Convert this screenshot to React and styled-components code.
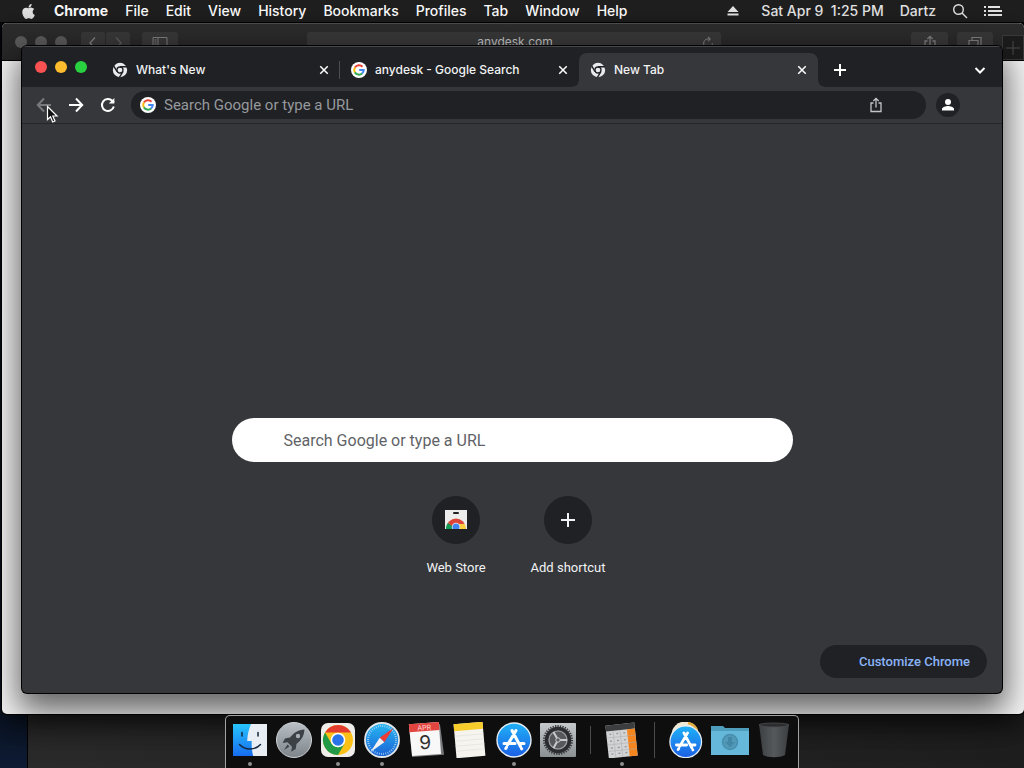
import React from "react";
import styled, { createGlobalStyle, css } from "styled-components";
import { FaApple } from "react-icons/fa";

const GlobalStyle = createGlobalStyle`
  * { box-sizing: border-box; }
  body { margin: 0; background: #0a1020; }
  button, input { font: inherit; color: inherit; border: 0; background: none; padding: 0; margin: 0; }
  svg { display: block; flex: none; }
`;

const uiFont = `Inter, "Open Sans", sans-serif`;
const webFont = `Roboto, "Liberation Sans", sans-serif`;

/* ---------- Desktop ---------- */
const Desktop = styled.div`
  position: relative;
  height: 100vh;
  overflow: hidden;
  background: linear-gradient(#05070c, #0b1526 92%, #0e1b33);
  font-family: ${uiFont};
  color: #fff;
`;

const MenuBar = styled.header`
  position: relative;
  display: flex;
  align-items: center;
  justify-content: space-between;
  height: 23px;
  padding: 0 22px 0 20px;
  background: #1f1f20;
  border-bottom: 1px solid #000;
  font-size: 14px;
  font-weight: 500;
  line-height: 22px;
`;

const MenuGroup = styled.nav`
  display: flex;
  align-items: center;
  gap: 17px;
`;

const MenuItem = styled.button`
  font-weight: ${(p) => (p.$strong ? 700 : 500)};
  white-space: nowrap;
`;

const MenuStatus = styled(MenuGroup)`
  gap: 16px;
  color: #e6e6e6;
`;

const Clock = styled.button`
  white-space: pre;
  margin-left: 6px;
`;

/* ---------- Windows ---------- */
const BackWindow = styled.div`
  position: absolute;
  top: 60px;
  left: 27px;
  right: 0;
  bottom: 0;
  background: linear-gradient(90deg, #2a2a2a, #1e1e1e);
  border-left: 1px solid #000;
`;

const SafariWindow = styled.section`
  position: absolute;
  top: 23px;
  left: 2px;
  right: 0;
  bottom: 54px;
  overflow: hidden;
  background: #f4f4f4;
  border-radius: 5px;
  box-shadow: 0 0 0 1px #000, 0 12px 30px rgba(0, 0, 0, 0.6);
`;

const SafariBar = styled.div`
  display: flex;
  align-items: flex-start;
  height: 38px;
  padding: 8px 0 0 13px;
  background: linear-gradient(#2c2c2d, #262627);
  border-top: 1px solid #4c4c4d;
  border-bottom: 1px solid #000;
`;

const Lights = styled.div`
  display: flex;
  align-self: ${(p) => (p.$center ? "center" : "flex-start")};
  gap: 8px;
  padding-top: ${(p) => (p.$center ? 0 : 4)}px;
`;

const Light = styled.button`
  width: 12px;
  height: 12px;
  border-radius: 50%;
  background: ${(p) => p.$color};
`;

const SafariButton = styled.button`
  display: flex;
  justify-content: center;
  align-items: center;
  width: ${(p) => p.$w}px;
  height: 22px;
  margin-left: ${(p) => p.$gap || 0}px;
  background: #373738;
  border-radius: 3px;
  color: #7c7c7d;
`;

const SafariAddress = styled.div`
  display: flex;
  flex: 1;
  justify-content: flex-end;
  align-items: center;
  min-width: 0;
  height: 22px;
  margin: 0 190px 0 129px;
  padding-right: 6px;
  background: #373738;
  border-radius: 3px;
  color: #7c7c7d;
`;

const SafariHost = styled.span`
  flex: 1;
  height: 22px;
  padding-left: 22px;
  text-align: center;
  font-size: 12px;
  line-height: 20px;
  color: #bdbdbd;
`;

const SafariNewTab = styled.button`
  display: flex;
  justify-content: center;
  align-items: center;
  align-self: flex-end;
  width: 22px;
  height: 25px;
  margin-left: 9px;
  background: #1c1c1d;
  border: 1px solid #3a3a3b;
  color: #4c4c4d;
`;

const ChromeWindow = styled.main`
  position: absolute;
  top: 46px;
  left: 22px;
  right: 22px;
  bottom: 75px;
  display: flex;
  flex-direction: column;
  overflow: hidden;
  background: #36373a;
  border-radius: 5px;
  box-shadow: 0 0 0 1px #000, 0 14px 32px 4px rgba(0, 0, 0, 0.6);
`;

const TabStrip = styled.div`
  display: flex;
  align-items: flex-end;
  height: 41px;
  padding: 0 12px 0 13px;
  background: #202124;
  border-top: 1px solid #47484a;
`;

const TabList = styled.div`
  display: flex;
  flex: 0 1 717px;
  min-width: 0;
  margin-left: 14px;
`;

const Tab = styled.div`
  position: relative;
  display: flex;
  flex: 1 1 0;
  align-items: center;
  min-width: 0;
  height: 34px;
  padding: 0 10px 0 11px;
  font-size: 12px;
  font-weight: 500;
  color: #f1f3f4;
  ${(p) =>
    p.$divider &&
    css`
      background: linear-gradient(#4b4d51, #4b4d51) right center / 1px 18px no-repeat;
    `}
  ${(p) =>
    p.$active &&
    css`
      background: #36373a;
      border-radius: 8px 8px 0 0;
      &::before,
      &::after {
        content: "";
        position: absolute;
        bottom: 0;
        width: 6px;
        height: 6px;
      }
      &::before {
        right: 100%;
        background: radial-gradient(circle at 0 0, transparent 5px, #36373a 6px);
      }
      &::after {
        left: 100%;
        background: radial-gradient(circle at 100% 0, transparent 5px, #36373a 6px);
      }
    `}
`;

const TabTitle = styled.button`
  flex: 1;
  min-width: 0;
  height: 18px;
  margin-left: 8px;
  overflow: hidden;
  text-align: left;
  line-height: 16px;
  white-space: nowrap;
`;

const IconButton = styled.button`
  display: flex;
  flex: none;
  justify-content: center;
  align-items: center;
  width: ${(p) => p.$size}px;
  height: ${(p) => p.$size}px;
  border-radius: 50%;
  background: ${(p) => p.$bg || "none"};
  color: ${(p) => p.$color || "#fff"};
`;

const StripActions = styled.div`
  display: flex;
  flex: 1;
  justify-content: space-between;
  align-items: center;
  height: 34px;
  padding-left: 12px;
`;

const Toolbar = styled.div`
  display: flex;
  align-items: center;
  height: 37px;
  padding: 0 42px 0 10px;
  border-bottom: 1px solid #25262a;
`;

const NavButtons = styled.div`
  display: flex;
  gap: 8px;
`;

const Omnibox = styled.label`
  display: flex;
  flex: 1;
  align-items: center;
  height: 28px;
  margin: 0 10px 0 11px;
  padding: 0 38px 0 9px;
  border-radius: 14px;
  background: #202124;
`;

const OmniInput = styled.input`
  flex: 1;
  min-width: 0;
  margin-left: 8px;
  outline: 0;
  font-family: ${webFont};
  font-size: 15px;
  &::placeholder { color: #96999d; opacity: 1; }
`;

/* ---------- New tab page ---------- */
const Page = styled.div`
  position: relative;
  display: flex;
  flex: 1;
  flex-direction: column;
  align-items: center;
  padding: 294px 24px 0;
  font-family: ${webFont};
`;

const SearchBox = styled.input`
  width: 100%;
  max-width: 561px;
  height: 44px;
  padding: 0 52px;
  border-radius: 22px;
  background: #fff;
  outline: 0;
  font-size: 16px;
  color: #202124;
  &::placeholder { color: #5f6368; opacity: 1; }
`;

const Shortcuts = styled.div`
  display: flex;
  margin-top: 34px;
`;

const Shortcut = styled.a`
  display: flex;
  flex-direction: column;
  align-items: center;
  gap: 16px;
  width: 112px;
  font-size: 13px;
  line-height: 16px;
  color: #f1f3f4;
  text-decoration: none;
`;

const ShortcutIcon = styled.span`
  display: flex;
  justify-content: center;
  align-items: center;
  width: 48px;
  height: 48px;
  border-radius: 50%;
  background: #202124;
`;

const Customize = styled.button`
  position: absolute;
  right: 15px;
  bottom: 15px;
  height: 33px;
  padding: 0 17px 0 39px;
  border-radius: 17px;
  background: #202124;
  font-size: 13px;
  font-weight: 500;
  color: #8ab4f8;
`;

/* ---------- Dock ---------- */
const DockLayer = styled.footer`
  position: absolute;
  left: 0;
  right: 0;
  bottom: 0;
  display: flex;
  justify-content: center;
`;

const DockShelf = styled.div`
  display: flex;
  gap: 8px;
  height: 53px;
  padding: 6px 6px 0;
  background: #0e0e0f;
  border: 1px solid #a2a2a2;
  border-bottom: 0;
  border-radius: 5px 5px 0 0;
`;

const DockItem = styled.button`
  display: flex;
  flex-direction: column;
  align-items: center;
  gap: 4px;
  width: 36px;
`;

const RunningDot = styled.span`
  width: 4px;
  height: 4px;
  border-radius: 50%;
  background: #8e8e8e;
`;

const DockDivider = styled.span`
  width: 1px;
  height: ${(p) => p.$h}px;
  margin: ${(p) => (36 - p.$h) / 2}px 5px 0 6px;
  background: #4a4a4a;
`;

const Cursor = styled.svg`
  position: absolute;
  top: 105px;
  left: 46px;
`;

/* ---------- Small icons ---------- */
const Stroke = ({ size = 16, w = 2, children, ...rest }) => (
  <svg width={size} height={size} viewBox="0 0 16 16" fill="none" stroke="currentColor" strokeWidth={w} {...rest}>
    {children}
  </svg>
);

const ChromeGlyph = () => (
  <svg width="16" height="16" viewBox="0 0 16 16">
    <circle cx="8" cy="8" r="7.200" fill="#e8eaed" />
    <circle cx="8" cy="8" r="3" fill="none" stroke="#202124" strokeWidth="1.300" />
    <path d="M8 4.700h7M5.100 9.700 1.700 3.900M10.900 9.700 7.300 15.600" stroke="#202124" strokeWidth="1.400" />
  </svg>
);

const GoogleIcon = () => (
  <svg width="16" height="16" viewBox="0 0 16 16">
    <circle cx="8" cy="8" r="8" fill="#fff" />
    <g fill="none" strokeWidth="2">
      <path d="M11.500 4.700A4.800 4.800 0 0 0 3.900 5.600" stroke="#ea4335" />
      <path d="M3.900 5.500a4.800 4.800 0 0 0 0 5" stroke="#fbbc05" />
      <path d="M3.900 10.400a4.800 4.800 0 0 0 7.200 1.100" stroke="#34a853" />
      <path d="M11 11.600A4.700 4.700 0 0 0 12.700 8H8.200" stroke="#4285f4" />
    </g>
  </svg>
);

const CloseIcon = () => (
  <Stroke size={12} w={2}>
    <path d="M3 3l10 10M13 3L3 13" />
  </Stroke>
);

const ShareIcon = ({ size = 16 }) => (
  <Stroke size={size} w={1.3}>
    <path d="M5.500 6H3v8.500h10V6h-2.500M8 10.500V1.500M5.300 4 8 1.400 10.700 4" />
  </Stroke>
);

const WebStoreIcon = () => (
  <svg width="24" height="22" viewBox="0 0 24 22">
    <clipPath id="bag"><path d="M1 1h22v19H1z" /></clipPath>
    <g clipPath="url(#bag)">
      <path d="M1 1h22v19H1z" fill="#ececec" />
      <circle cx="12" cy="19" r="9.500" fill="#db4437" />
      <path d="M12 20 3.800 14A10 10 0 0 0 2 21h10z" fill="#0f9d58" />
      <path d="M12 15h8.700c1 2 1.300 4 1 6H12z" fill="#ffcd40" />
      <circle cx="12" cy="18" r="4.200" fill="#f1f1f1" />
      <circle cx="12" cy="18" r="3.500" fill="#4285f4" />
    </g>
    <rect x="9" y="3" width="6" height="2" rx="1" fill="#222" />
  </svg>
);

/* ---------- Dock icons ---------- */
const Art = ({ children }) => (
  <svg width="36" height="36" viewBox="0 0 36 36">{children}</svg>
);

const Finder = () => (
  <Art>
    <linearGradient id="fb" x1="0" y1="0" x2="0" y2="1"><stop stopColor="#27c4fb" /><stop offset="1" stopColor="#176df0" /></linearGradient>
    <path d="M1 2h34v32H1z" fill="url(#fb)" />
    <path d="M19 2c-2 5-3.500 10-3.800 17h4.500c-.2 5 .2 10 1.500 15H35V2z" fill="#e9eef5" />
    <path d="M10 10.500v3.500M26 10.500v3.500M7.500 22.500c5.500 6 15.500 6 21 0" fill="none" stroke="#14263c" strokeWidth="1.500" strokeLinecap="round" />
  </Art>
);

const Launchpad = () => (
  <Art>
    <linearGradient id="lp" x1="0" y1="0" x2="0" y2="1"><stop stopColor="#b9bfc4" /><stop offset="1" stopColor="#7d858b" /></linearGradient>
    <circle cx="18" cy="18" r="17.500" fill="url(#lp)" stroke="#cdd1d4" />
    <path d="M28.500 7.500C22 8 17.500 11 14 15.500l-5 1-2.500 4.500 5-.8 4.500 4.500-.8 5 4.500-2.700.8-5C25.500 18 28 14 28.500 7.500z" fill="#3c4146" />
    <path d="M11.500 22.500 8 28l5.500-3.500z" fill="#3c4146" />
    <circle cx="22" cy="14" r="2.200" fill="#a9afb4" />
  </Art>
);

const ChromeApp = () => (
  <Art>
    <rect x="1" y="1" width="34" height="34" rx="7" fill="#f0eeea" />
    <g transform="translate(18 18)">
      <circle r="15" fill="#fbc116" />
      <path d="M0-7.500H-13A15 15 0 0 1 13-7.500z" fill="#e33b2e" />
      <path d="M-13-7.500-6.500 3.700 0 7.500 6.500 3.700 0 15A15 15 0 0 1-13-7.500z" fill="#229a48" />
      <circle r="7.300" fill="#fff" />
      <circle r="5.800" fill="#2a73e8" />
    </g>
  </Art>
);

const Safari = () => (
  <Art>
    <linearGradient id="sf" x1="0" y1="0" x2="0" y2="1"><stop stopColor="#27b7f2" /><stop offset="1" stopColor="#1a62d5" /></linearGradient>
    <circle cx="18" cy="18" r="17" fill="url(#sf)" stroke="#dfe5e9" strokeWidth="1.800" />
    <circle cx="18" cy="18" r="14" fill="none" stroke="#b7ddf8" strokeWidth="2" strokeDasharray=".7 1.500" />
    <path d="M29.500 6 20.300 20.300 15.700 15.700z" fill="#ee3c36" />
    <path d="M6.500 30 15.700 15.700 20.300 20.300z" fill="#f2f2f2" />
  </Art>
);

const Calendar = () => (
  <Art>
    <g transform="rotate(-4 18 18)">
      <path d="M2 3h31l2 31H3z" fill="#77797c" />
      <path d="M2 1h30v32H3z" fill="#f8f8f8" />
      <path d="M2 1h30v8H2z" fill="#e2453f" />
      <text x="17" y="8" fontSize="7" textAnchor="middle" fill="#ffd8d6" fontFamily={uiFont}>APR</text>
      <text x="17" y="27" fontSize="19" textAnchor="middle" fill="#303030" fontFamily={uiFont}>9</text>
    </g>
  </Art>
);

const Notes = () => (
  <Art>
    <g transform="rotate(-5 18 18)">
      <path d="M3 1h29v34H3z" fill="#f6f4ef" />
      <path d="M3 1h29v7H3z" fill="#f7cd2c" />
      <path d="M3 13h29M3 18h29M3 23h29M3 28h29" stroke="#e0ded9" strokeWidth=".6" />
    </g>
  </Art>
);

const StoreDisc = () => (
  <>
    <linearGradient id="as" x1="0" y1="0" x2="0" y2="1"><stop stopColor="#1fb2f7" /><stop offset="1" stopColor="#1b5fe5" /></linearGradient>
    <circle cx="18" cy="18" r="17" fill="url(#as)" stroke="#e5ecf2" strokeWidth="1.400" />
    <g stroke="#fff" strokeWidth="3" strokeLinecap="round">
      <path d="M16 8.500 24.500 24.500M20 8.500 11.500 23M8 21.500h11M24 21.500h4M10.500 25.300l-.7 1.200M25.500 26.500l.2.300" />
    </g>
  </>
);

const AppStore = () => <Art><StoreDisc /></Art>;

const Settings = () => (
  <Art>
    <linearGradient id="sp" x1="0" y1="0" x2="0" y2="1"><stop stopColor="#c5c9cc" /><stop offset="1" stopColor="#8b9093" /></linearGradient>
    <rect y="1" width="36" height="34" rx="1" fill="url(#sp)" />
    <circle cx="18" cy="18" r="14" fill="none" stroke="#38393b" strokeWidth="2" strokeDasharray="1.300 1.200" />
    <circle cx="18" cy="18" r="11.500" fill="#56585b" stroke="#2b2c2f" strokeWidth="3.500" />
    <circle cx="18" cy="18" r="9" fill="none" stroke="#9fa2a5" strokeWidth="1.200" />
    <path d="M18 18h9M18 18l-4.500-8M18 18l-4.500 8" stroke="#c8cbcd" strokeWidth="2" />
    <circle cx="18" cy="18" r="2.200" fill="#5a5c5f" stroke="#c8cbcd" />
  </Art>
);

const Calculator = () => (
  <Art>
    <g transform="rotate(-6 18 18)">
      <path d="M3 2h29v33H3z" fill="#d2d3d4" />
      <path d="M3 2h29v6H3z" fill="#3b3d3f" />
      <path d="M24 8h8v27h-8z" fill="#f5861f" />
      <path d="M3 14.500h29M3 21.500h29M3 28h29M10 8v27M17 8v27" stroke="#a9aaac" strokeWidth=".5" />
      <path d="M5 11h17M5 18h17M5 25h17M5 31h17" stroke="#95979a" strokeWidth="1.300" strokeDasharray="2 5" strokeDashoffset="-1" />
    </g>
  </Art>
);

const StoreStack = () => (
  <Art>
    <circle cx="17" cy="13" r="13.500" fill="#efe8d4" />
    <path d="M20 1c5 1 8 4 9 8" stroke="#dfac42" strokeWidth="2.500" fill="none" />
    <g transform="translate(1 3) scale(.93)"><StoreDisc /></g>
  </Art>
);

const Downloads = () => (
  <svg width="40" height="36" viewBox="0 0 40 36">
    <path d="M1 4h12l2 2h24v27H1z" fill="#4e9dbd" />
    <path d="M1 9h38v24H1z" fill="#65b8d9" />
    <circle cx="20" cy="20" r="7.500" fill="#5199b7" stroke="#488faf" strokeWidth="1.500" />
    <path d="M18 15h4v5h3l-5 5-5-5h3z" fill="#4288a6" />
  </svg>
);

const Trash = () => (
  <Art>
    <linearGradient id="tr"><stop stopColor="#3c3f42" /><stop offset=".5" stopColor="#56595c" /><stop offset="1" stopColor="#3c3f42" /></linearGradient>
    <path d="M3 2h30l-4 31c-5 3-17 3-22 0z" fill="url(#tr)" />
    <ellipse cx="18" cy="3" rx="15" ry="2" fill="#2b2d2f" stroke="#4b4d4f" strokeWidth=".8" />
  </Art>
);

/* ---------- Data ---------- */
const menus = ["File", "Edit", "View", "History", "Bookmarks", "Profiles", "Tab", "Window", "Help"];

const tabs = [
  { title: "What's New", Icon: ChromeGlyph, divider: true },
  { title: "anydesk - Google Search", Icon: GoogleIcon },
  { title: "New Tab", Icon: ChromeGlyph, active: true },
];

const apps = [
  { name: "Finder", Icon: Finder, running: true },
  { name: "Launchpad", Icon: Launchpad },
  { name: "Google Chrome", Icon: ChromeApp, running: true },
  { name: "Safari", Icon: Safari, running: true },
  { name: "Calendar", Icon: Calendar },
  { name: "Notes", Icon: Notes },
  { name: "App Store", Icon: AppStore, running: true },
  { name: "System Preferences", Icon: Settings },
  { divider: 28 },
  { name: "Calculator", Icon: Calculator, running: true },
  { divider: 36 },
  { name: "Applications", Icon: StoreStack },
  { name: "Downloads", Icon: Downloads },
  { name: "Trash", Icon: Trash },
];

function WindowLights({ colors, center }) {
  return (
    <Lights $center={center}>
      {["Close", "Minimize", "Zoom"].map((name, i) => (
        <Light key={name} aria-label={name} $color={colors[i]} />
      ))}
    </Lights>
  );
}

function SafariBrowser() {
  return (
    <SafariWindow aria-label="Safari">
      <SafariBar>
        <WindowLights colors={["#59595a", "#59595a", "#59595a"]} />
        <SafariButton $w={24} $gap={14} aria-label="Back"><Stroke w={1.4}><path d="M10 2.500 5 8l5 5.500" /></Stroke></SafariButton>
        <SafariButton $w={24} $gap={1} aria-label="Forward"><Stroke w={1.4} opacity=".5"><path d="M6 2.500 11 8l-5 5.500" /></Stroke></SafariButton>
        <SafariButton $w={36} $gap={12} aria-label="Sidebar"><Stroke w={1}><path d="M1 2.500h14v11H1zM6 2.500v11M2.500 5h2M2.500 7h2M2.500 9h2" /></Stroke></SafariButton>
        <SafariAddress>
          <SafariHost>anydesk.com</SafariHost>
          <Stroke size={14} w={1.2}><path d="M13 8.500A5 5 0 1 1 8 3.500h2M8 1l2.500 2.500L8 6" /></Stroke>
        </SafariAddress>
        <SafariButton $w={37} aria-label="Share"><ShareIcon /></SafariButton>
        <SafariButton $w={36} $gap={9} aria-label="Tabs"><Stroke w={1.2}><path d="M2 5.500h9v8H2zM5 5.500v-3h9v8h-3" /></Stroke></SafariButton>
        <SafariNewTab aria-label="New tab"><Stroke w={1}><path d="M8 1v14M1 8h14" /></Stroke></SafariNewTab>
      </SafariBar>
    </SafariWindow>
  );
}

function ChromeBrowser() {
  return (
    <ChromeWindow>
      <TabStrip>
        <WindowLights center colors={["#fb5153", "#fdbc2e", "#29d140"]} />
        <TabList>
          {tabs.map(({ title, Icon, divider, active }) => (
            <Tab key={title} $divider={divider} $active={active}>
              <Icon />
              <TabTitle>{title}</TabTitle>
              <IconButton $size={12} aria-label={`Close ${title}`}><CloseIcon /></IconButton>
            </Tab>
          ))}
        </TabList>
        <StripActions>
          <IconButton $size={20} aria-label="New tab"><Stroke><path d="M8 2v12M2 8h12" /></Stroke></IconButton>
          <IconButton $size={20} aria-label="Search tabs"><Stroke><path d="M3.500 6 8 10.500 12.500 6" /></Stroke></IconButton>
        </StripActions>
      </TabStrip>
      <Toolbar>
        <NavButtons>
          <IconButton $size={24} $color="#77797c" aria-label="Back"><Stroke><path d="M15 8H2M8 1.500 1.800 8 8 14.500" /></Stroke></IconButton>
          <IconButton $size={24} aria-label="Forward"><Stroke><path d="M1 8h13M8 1.500 14.200 8 8 14.500" /></Stroke></IconButton>
          <IconButton $size={24} aria-label="Reload"><Stroke><path d="M13.800 9.500A6 6 0 1 1 12.400 3.900L14 5.500" /><path d="M14.300 1v5.500H8.800z" fill="currentColor" stroke="none" /></Stroke></IconButton>
        </NavButtons>
        <Omnibox>
          <GoogleIcon />
          <OmniInput aria-label="Address bar" placeholder="Search Google or type a URL" />
          <IconButton $size={24} $color="#c3c5c8" aria-label="Share page"><ShareIcon /></IconButton>
        </Omnibox>
        <IconButton $size={24} $bg="#202124" aria-label="Profile">
          <svg width="16" height="16" viewBox="0 0 16 16" fill="#fff"><circle cx="8" cy="5" r="3" /><path d="M2 13.500V12c0-2 4-3 6-3s6 1 6 3v1.500z" /></svg>
        </IconButton>
      </Toolbar>
      <Page>
        <SearchBox aria-label="Search" placeholder="Search Google or type a URL" />
        <Shortcuts>
          <Shortcut href="#store"><ShortcutIcon><WebStoreIcon /></ShortcutIcon>Web Store</Shortcut>
          <Shortcut href="#add"><ShortcutIcon><Stroke><path d="M8 1v14M1 8h14" /></Stroke></ShortcutIcon>Add shortcut</Shortcut>
        </Shortcuts>
        <Customize>Customize Chrome</Customize>
      </Page>
    </ChromeWindow>
  );
}

export default function App() {
  return (
    <Desktop>
      <GlobalStyle />
      <MenuBar>
        <MenuGroup>
          <MenuItem aria-label="Apple"><FaApple size={17} color="#e4e4e4" /></MenuItem>
          <MenuItem $strong>Chrome</MenuItem>
          {menus.map((m) => <MenuItem key={m}>{m}</MenuItem>)}
        </MenuGroup>
        <MenuStatus>
          <MenuItem aria-label="Eject"><svg width="12" height="12" viewBox="0 0 12 12" fill="#e6e6e6"><path d="M6 1l5.500 6H.5zM.5 8.500h11v2H.5z" /></svg></MenuItem>
          <Clock>{"Sat Apr 9  1:25 PM"}</Clock>
          <MenuItem>Dartz</MenuItem>
          <MenuItem aria-label="Spotlight"><Stroke w={1.4}><circle cx="6.500" cy="6.500" r="4.800" /><path d="M10 10l5 5" /></Stroke></MenuItem>
          <MenuItem aria-label="Notification Center"><svg width="18" height="12" viewBox="0 0 18 12" stroke="#e6e6e6" strokeWidth="2"><path d="M0 2h2M4 2h12M0 6h2M4 6h14M0 10h2M4 10h14" /></svg></MenuItem>
        </MenuStatus>
      </MenuBar>
      <BackWindow />
      <SafariBrowser />
      <ChromeBrowser />
      <DockLayer>
        <DockShelf>
          {apps.map(({ name, Icon, running, divider }) =>
            divider ? (
              <DockDivider key={divider} $h={divider} />
            ) : (
              <DockItem key={name} aria-label={name}>
                <Icon />
                {running && <RunningDot />}
              </DockItem>
            )
          )}
        </DockShelf>
      </DockLayer>
      <Cursor width="13" height="19" viewBox="0 0 13 19">
        <path d="M1.500 1.500v13l3-2.800 2.200 5.300 2.300-1-2.200-5h4.200z" fill="#111" stroke="#fff" strokeWidth="1.200" />
      </Cursor>
    </Desktop>
  );
}
